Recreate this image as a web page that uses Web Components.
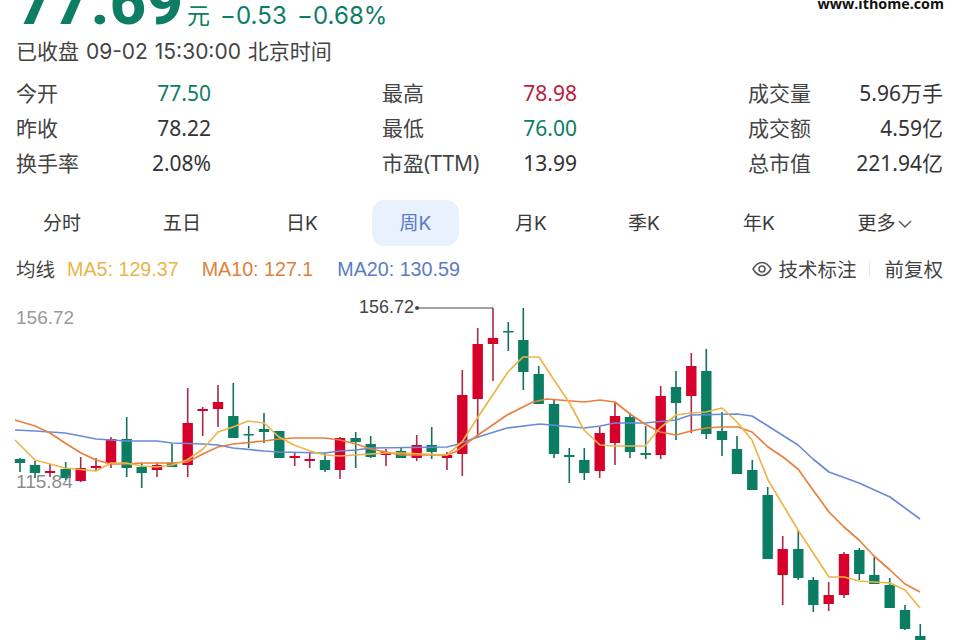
<!DOCTYPE html>
<html lang="zh">
<head>
<meta charset="utf-8">
<title>周K</title>
<style>
  html, body { margin: 0; background: #fff; }
  body { width: 960px; height: 640px; overflow: hidden; position: relative; font-family: Inter, "Noto Sans CJK SC", sans-serif; color: #333; }
</style>
</head>
<body>
<stock-header price="77.69" change="-0.53" percent="-0.68%">已收盘 09-02 15:30:00 北京时间</stock-header>
<site-mark>www.ithome.com</site-mark>
<quote-stats>
  <stat-cell label="今开" value="77.50" tone="down"></stat-cell>
  <stat-cell label="最高" value="78.98" tone="up"></stat-cell>
  <stat-cell label="成交量" value="5.96万手"></stat-cell>
  <stat-cell label="昨收" value="78.22"></stat-cell>
  <stat-cell label="最低" value="76.00" tone="down"></stat-cell>
  <stat-cell label="成交额" value="4.59亿"></stat-cell>
  <stat-cell label="换手率" value="2.08%"></stat-cell>
  <stat-cell label="市盈(TTM)" value="13.99"></stat-cell>
  <stat-cell label="总市值" value="221.94亿"></stat-cell>
</quote-stats>
<period-tabs>
  <period-tab>分时</period-tab>
  <period-tab>五日</period-tab>
  <period-tab>日K</period-tab>
  <period-tab active>周K</period-tab>
  <period-tab>月K</period-tab>
  <period-tab>季K</period-tab>
  <period-tab>年K</period-tab>
  <period-tab more>更多</period-tab>
</period-tabs>
<ma-legend></ma-legend>
<kline-chart></kline-chart>

<script>
class StockHeader extends HTMLElement {
  constructor() {
    super();
    this.attachShadow({ mode: "open" });
    this.shadowRoot.innerHTML = `
<style>
:host { display: block; padding-left: 16px; color: #0d7d64; }
.row { display: flex; align-items: baseline; height: 63px; margin-top: -29px; }
.price { font: 800 63px/63px Roboto, sans-serif; margin-left: 1px; width: 170px; letter-spacing: .5px; }
.unit { font: 400 23px/24px "Noto Sans CJK SC", sans-serif; }
.chg { font: 400 24px/24px Inter, sans-serif; margin-left: 10px; letter-spacing: .1px; }
.sub { font: 400 21px/36px Inter, "Noto Sans CJK SC", sans-serif; word-spacing: 1px; color: #444; white-space: nowrap; }
</style>
<div class="row">
  <span class="price"></span><span class="unit">元</span>
  <span class="chg" id="change"></span><span class="chg" id="percent"></span>
</div>
<div class="sub"><slot></slot></div>`;
  }

  connectedCallback() {
    this.shadowRoot.querySelector(".price").textContent = this.getAttribute("price");
    this.shadowRoot.querySelector("#change").textContent = this.getAttribute("change").replace("-", "\u2212");
    this.shadowRoot.querySelector("#percent").textContent = this.getAttribute("percent").replace("-", "\u2212");
  }
}

class SiteMark extends HTMLElement {
  constructor() {
    super();
    this.attachShadow({ mode: "open" });
    this.shadowRoot.innerHTML = `
<style>
:host { position: absolute; top: -4px; right: 16px; font: 700 14.3px/16px "Open Sans", sans-serif; color: #111; }
</style>
<slot></slot>`;
  }
}

class QuoteStats extends HTMLElement {
  constructor() {
    super();
    this.attachShadow({ mode: "open" });
    this.shadowRoot.innerHTML = `
<style>
:host { display: grid; grid-template-columns: repeat(3, 195px); column-gap: 171px; padding-left: 16px; margin-top: 6px; }
</style>
<slot></slot>`;
  }
}

class StatCell extends HTMLElement {
  constructor() {
    super();
    this.attachShadow({ mode: "open" });
    this.shadowRoot.innerHTML = `
<style>
:host { display: flex; justify-content: space-between; height: 35px; font: 400 21px/35px "Noto Sans", "Noto Sans CJK SC", sans-serif; color: #333; white-space: nowrap; }
.label { color: #444; }
:host([tone="down"]) .value { color: #0d7d64; }
:host([tone="up"]) .value { color: #b8203f; }
</style>
<span class="label"></span><span class="value"></span>`;
  }

  connectedCallback() {
    this.shadowRoot.querySelector(".label").textContent = this.getAttribute("label");
    this.shadowRoot.querySelector(".value").textContent = this.getAttribute("value");
  }
}

class PeriodTabs extends HTMLElement {
  constructor() {
    super();
    this.attachShadow({ mode: "open" });
    this.shadowRoot.innerHTML = `
<style>
:host { display: grid; grid-template-columns: 120px 120px 120px 107px 124px 102px 128px 124px; margin: 19px 0 0 2px; height: 46px; }
</style>
<slot></slot>`;
  }
}

class PeriodTab extends HTMLElement {
  constructor() {
    super();
    this.attachShadow({ mode: "open" });
    this.shadowRoot.innerHTML = `
<style>
:host { display: flex; justify-content: center; font: 400 19px/44px Inter, "Noto Sans CJK SC", sans-serif; color: #3a3a3a; }
.pill { display: flex; align-items: center; justify-content: center; box-sizing: border-box; width: 87px; height: 46px; padding-top: 2px; border-radius: 13px; }
:host([active]) .pill { background: #e8f1fc; color: #5b7cc4; }
svg { display: none; margin-left: 1px; }
:host([more]) svg { display: block; }
</style>
<div class="pill"><slot></slot><svg width="16" height="10" viewBox="0 0 16 10"><path d="M2 2 L8 8 L14 2" fill="none" stroke="#555" stroke-width="1.4"/></svg></div>`;
  }
}

class MaLegend extends HTMLElement {
  constructor() {
    super();
    this.attachShadow({ mode: "open" });
    this.shadowRoot.innerHTML = `
<style>
:host { display: flex; align-items: center; height: 46px; padding: 0 17px 0 16px; font: 400 19.7px/46px "Liberation Sans", sans-serif; white-space: nowrap; }
.cn { font: 400 19.5px/46px "Noto Sans CJK SC", sans-serif; color: #444; }
.ma5 { color: #e9b44c; margin-left: 12px; }
.ma10 { color: #e07f3c; margin-left: 23px; }
.ma20 { color: #5b7cc4; margin-left: 24px; }
.tools { margin-left: auto; display: flex; align-items: center; }
svg { margin-right: 6px; }
.sep { width: 1px; height: 16px; background: #e8e8e8; margin: 0 14px 0 13px; }
</style>
<span class="cn">均线</span>
<span class="ma5">MA5: 129.37</span>
<span class="ma10">MA10: 127.1</span>
<span class="ma20">MA20: 130.59</span>
<div class="tools">
  <svg width="20" height="16" viewBox="0 0 20 16">
    <path d="M1 8 C4 3 7 1.5 10 1.5 S16 3 19 8 C16 13 13 14.5 10 14.5 S4 13 1 8 Z" fill="none" stroke="#555" stroke-width="1.5"/>
    <circle cx="10" cy="8" r="3" fill="none" stroke="#555" stroke-width="1.5"/>
  </svg>
  <span class="cn">技术标注</span><span class="sep"></span><span class="cn">前复权</span>
</div>`;
  }
}

// x, wick top, wick bottom, body top, body bottom, r = red
const candles = [
  [20,458,472,459,463,"g"],[35,461,478,465,473,"g"],[50,464,477,471,473,"r"],[65.7,462,480,469,478,"g"],
  [80.7,457,482,468,481,"r"],[96,458,471,466,468,"r"],[111,437,468,439,463,"r"],[126.7,417,477,439,468,"g"],
  [141.7,463,488,467,473,"g"],[157,463,477,465,470,"r"],[172,444,467,463,467,"g"],[187.7,388,477,423,465,"r"],
  [202.7,407,436,409,411,"r"],[218,385,427,402,409,"r"],[233.3,383,438,416,438,"g"],[248.7,426,448,434,435,"g"],
  [264,413,443,429,432,"g"],[279.3,431,458,431,458,"g"],[294.7,452,466,456,458,"r"],[309.7,452,468,459,461,"r"],
  [325,453,472,460,470,"g"],[340,437,479,438,470,"r"],[355.7,432,468,438,442,"g"],[370.7,436,458,444,457,"g"],
  [386,449,466,452,455,"r"],[401,448,458,451,458,"g"],[416.7,435,461,445,458,"r"],[431.7,427,459,445,452,"g"],
  [447,452,470,455,458,"r"],[462.3,370,476,395,454,"r"],[477.7,328,437,344,399,"r"],[493,308,381,338,344,"r"],
  [508.3,322,351,331,332,"g"],[523.3,308,390,340,372,"g"],[538.7,366,404,374,404,"g"],[554,400,458,404,454,"g"],
  [569.3,448,483,455,457,"g"],[584.3,448,480,460,473,"g"],[599.7,427,478,433,471,"r"],[615,402,465,416,443,"r"],
  [630,413,458,417,452,"g"],[645.7,426,459,453,455,"g"],[660.7,386,459,396,455,"r"],[676,371,440,387,403,"g"],
  [691.3,353,433,366,396,"r"],[706.3,349,439,371,434,"g"],[722,412,456,431,440,"g"],[737,436,474,449,474,"g"],
  [752.3,460,490,470,490,"g"],[767.7,487,559,495,559,"g"],[782.7,536,605,549,575,"r"],[798.3,530,580,549,578,"g"],
  [813.3,577,612,580,605,"g"],[828.7,582,611,595,604,"r"],[844,552,598,554,595,"r"],[859.3,548,580,550,574,"g"],
  [874.3,556,584,575,584,"g"],[889.7,578,608,585,608,"g"],[905,605,630,610,629,"g"],[920.3,624,642,636,642,"g"],
];

const ma5 = "15,440 35,460 65,468 96,471 111,463 126,463 142,466 157,467 172,465 187,460 203,449 218,432 233,427 248,421 264,423 279,437 294,445 310,451 325,455 340,456 355,455 371,454 386,453 401,453 447,455 462,442 478,417 508,372 523,357 539,357 554,380 569,402 584,430 600,445 615,446 645,446 660,428 676,415 691,413 706,412 722,408 737,422 752,440 768,480 798,530 829,577 844,577 859,581 874,582 890,583 905,590 920,608";
const ma10 = "15,420 35,426 50,433 65,443 81,453 96,460 111,464 126,464 142,463 172,463 187,462 207,452 218,447 233,444 264,441 279,439 294,438 325,438 340,440 356,444 371,449 386,452 401,455 447,455 455,452 478,435 507,415 533,402 547,399 584,402 600,400 615,402 630,414 645,424 660,432 676,435 691,431 706,428 722,427 738,427 752,432 768,447 783,457 798,469 813,490 829,512 844,527 859,540 874,556 890,570 905,584 920,592";
const ma20 = "15,430 35,431 65,433 81,436 96,439 126,441 157,441 172,443 203,444 218,445 233,448 264,451 279,452 325,453 340,451 356,450 371,448 447,447 455,445 478,437 507,428 540,424 584,428 600,426 615,423 645,423 676,420 691,415 737,414 752,416 768,426 798,445 813,459 829,472 859,483 890,497 920,519";

class KlineChart extends HTMLElement {
  constructor() {
    super();
    this.attachShadow({ mode: "open" });
    const bars = candles.map(([x, wt, wb, bt, bb, c]) => {
      const body = c === "r" ? "#d6002a" : "#0b7d63";
      const wick = c === "r" ? "#a82a45" : "#136f5a";
      return `<line x1="${x}" x2="${x}" y1="${wt}" y2="${wb}" stroke="${wick}" stroke-width="1.6"/>` +
        `<rect x="${x - 5.2}" y="${bt}" width="10.4" height="${Math.max(bb - bt, 1.5)}" fill="${body}"/>`;
    }).join("");
    this.shadowRoot.innerHTML = `
<style>
:host { display: block; height: 348px; }
svg { display: block; }
text { font-family: "Liberation Sans", sans-serif; }
polyline { fill: none; stroke-width: 1.7; stroke-linejoin: round; }
</style>
<svg width="960" height="348" viewBox="0 292 960 348">
  <text x="16" y="324" font-size="19" fill="#9a9a9a">156.72</text>
  <g>${bars}</g>
  <polyline points="${ma20}" stroke="#6a8bd6"/>
  <polyline points="${ma10}" stroke="#e8803e"/>
  <polyline points="${ma5}" stroke="#eeb54a"/>
  <text x="16" y="488" font-size="19" fill="#777" fill-opacity=".85">115.84</text>
  <text x="359" y="313" font-size="18" fill="#444">156.72</text>
  <circle cx="417" cy="308" r="2" fill="#444"/>
  <path d="M417 308 H493" stroke="#444" stroke-width="1.2" fill="none"/>
</svg>`;
  }
}

window.customElements.define("stock-header", StockHeader);
window.customElements.define("site-mark", SiteMark);
window.customElements.define("quote-stats", QuoteStats);
window.customElements.define("stat-cell", StatCell);
window.customElements.define("period-tabs", PeriodTabs);
window.customElements.define("period-tab", PeriodTab);
window.customElements.define("ma-legend", MaLegend);
window.customElements.define("kline-chart", KlineChart);
</script>
</body>
</html>
